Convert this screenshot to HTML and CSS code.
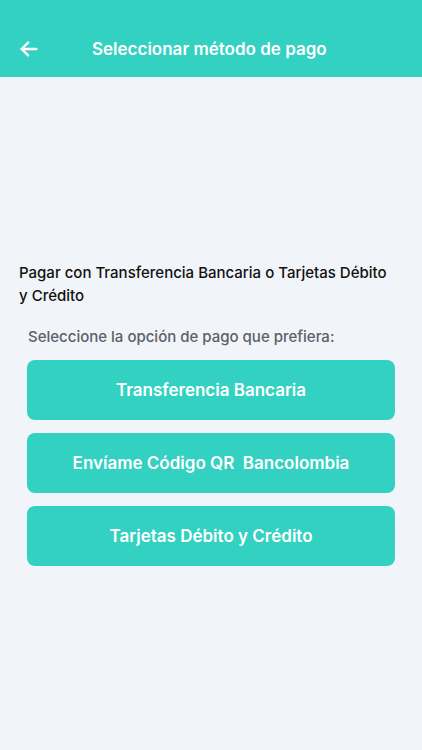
FILE: index.html
```html
<!DOCTYPE html>
<html>
<head>
  <meta charset="utf-8">
  <title>Seleccionar método de pago</title>
  <link rel="stylesheet" href="styles.css">
</head>
<body>
  <header class="topbar">
    <button class="back" aria-label="Volver">
      <svg width="22" height="22" viewBox="0 0 24 24" fill="none" stroke="#fff" stroke-width="2.6" stroke-linecap="round" stroke-linejoin="round">
        <path d="M20 12H4"/>
        <path d="M11 5l-7 7 7 7"/>
      </svg>
    </button>
    <h1 class="title">Seleccionar método de pago</h1>
  </header>

  <main class="content">
    <p class="intro">Pagar con Transferencia Bancaria o Tarjetas Débito y Crédito</p>
    <p class="hint">Seleccione la opción de pago que prefiera:</p>
    <div class="options">
      <button class="option">Transferencia Bancaria</button>
      <button class="option">Envíame Código QR&nbsp; Bancolombia</button>
      <button class="option">Tarjetas Débito y Crédito</button>
    </div>
  </main>
</body>
</html>
```

FILE: styles.css
```css
body {
  margin: 0;
  font-family: Inter, "Noto Sans", sans-serif;
  background-color: #f1f4f8;
  color: #111;
}
.topbar {
  height: 77px;
  background-color: #33d1c1;
  display: flex;
  align-items: center;
  padding: 20px 16px 0 17px;
  box-sizing: border-box;
}
.back {
  background: none;
  border: none;
  padding: 0;
  width: 24px;
  height: 24px;
  display: flex;
  align-items: center;
  justify-content: center;
  cursor: pointer;
}
.title {
  margin: 0 0 0 51px;
  font-size: 17px;
  font-weight: 600;
  color: #fff;
}
.content {
  padding: 184px 19px 0 19px;
}
.intro {
  margin: 0;
  font-size: 15px;
  font-weight: 500;
  line-height: 23px;
  padding-right: 10px;
}
.hint {
  margin: 19px 0 0 9px;
  font-size: 15px;
  font-weight: 500;
  line-height: 22px;
  color: #5b606b;
}
.options {
  display: flex;
  flex-direction: column;
  gap: 13px;
  margin: 12px 8px 0 8px;
}
.option {
  height: 60px;
  border: none;
  border-radius: 8px;
  background-color: #33d1c1;
  color: #fff;
  font-family: inherit;
  font-size: 17px;
  font-weight: 600;
  cursor: pointer;
}
```
